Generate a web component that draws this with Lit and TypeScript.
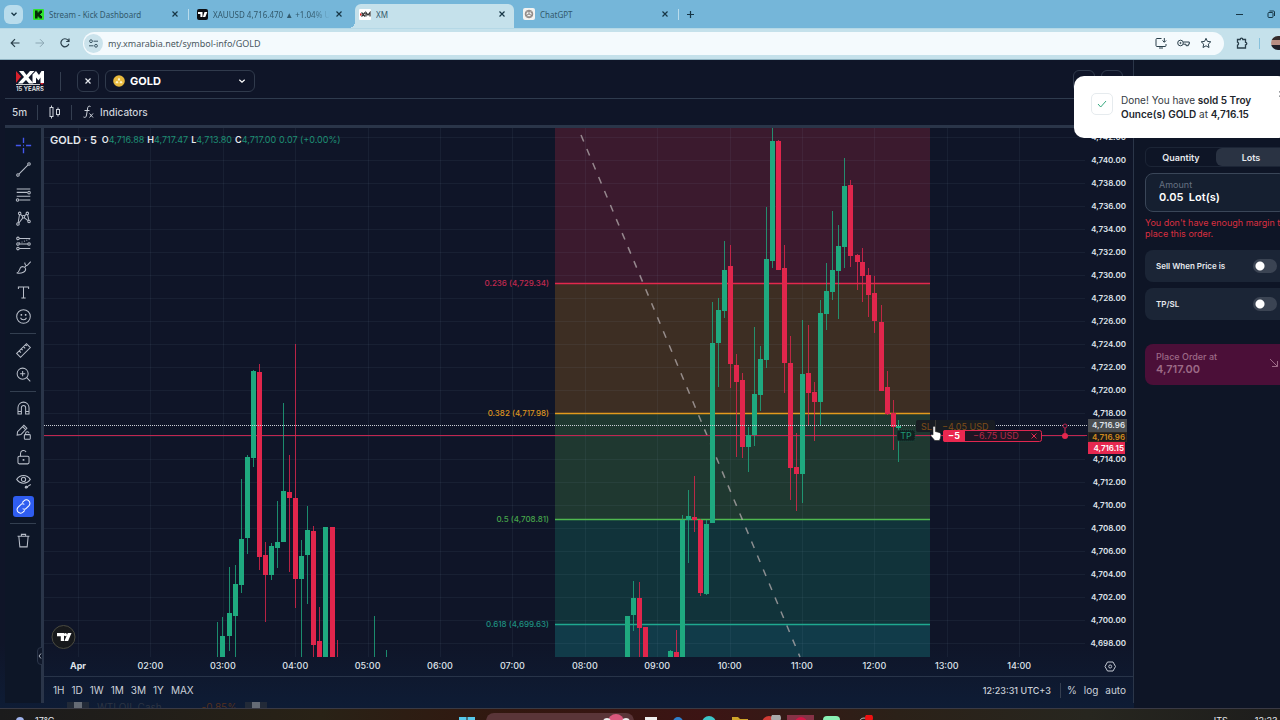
import { LitElement, html, svg, css } from "lit";
import { customElement, state } from "lit/decorators.js";
import { classMap } from "lit/directives/class-map.js";

type Candle = [number, number, number, number, number, "u" | "d"];

/* x, high, body top, body bottom, low, direction */
const CANDLES: Candle[] = [
  [217, 622, 656, 656, 657, "u"], [222, 617, 636, 657, 657, "u"], [229, 567, 613, 636, 651, "u"],
  [235, 565, 584, 616, 657, "u"], [241, 479, 539, 585, 593, "u"], [247, 455, 457, 538, 554, "u"],
  [253, 370, 371, 458, 467, "u"], [259, 364, 372, 557, 570, "d"], [265, 542, 555, 575, 622, "d"],
  [271, 543, 546, 575, 580, "u"], [277, 501, 542, 548, 568, "u"], [283, 403, 491, 542, 542, "u"],
  [289, 455, 492, 498, 572, "d"], [295, 344, 498, 579, 608, "d"], [301, 540, 556, 579, 657, "u"],
  [307, 506, 530, 555, 604, "u"], [313, 526, 531, 645, 657, "d"], [319, 607, 641, 657, 657, "d"],
  [325, 527, 527, 657, 657, "u"], [332, 527, 527, 657, 657, "d"], [337, 640, 657, 657, 657, "d"],
  [374, 616, 657, 657, 657, "u"], [386, 650, 657, 657, 657, "u"],
  [627, 616, 616, 657, 657, "u"], [633, 581, 598, 615, 631, "u"], [639, 582, 598, 628, 657, "d"],
  [645, 627, 627, 657, 657, "d"], [670, 650, 651, 657, 657, "u"], [676, 630, 652, 657, 657, "d"],
  [682, 515, 520, 657, 657, "u"], [688, 490, 516, 520, 563, "u"], [694, 476, 517, 520, 532, "d"],
  [700, 519, 520, 593, 596, "d"], [706, 520, 524, 594, 595, "u"], [712, 302, 343, 523, 523, "u"],
  [718, 298, 310, 343, 387, "u"], [724, 241, 270, 311, 318, "u"], [730, 245, 266, 364, 388, "d"],
  [736, 354, 365, 382, 457, "d"], [742, 373, 380, 447, 458, "d"], [748, 427, 435, 447, 472, "u"],
  [754, 327, 394, 435, 446, "u"], [760, 346, 359, 395, 411, "u"], [766, 207, 259, 360, 368, "u"],
  [772, 128, 141, 261, 268, "u"], [778, 140, 141, 270, 270, "d"], [784, 245, 268, 363, 393, "d"],
  [790, 336, 363, 468, 500, "d"], [796, 433, 467, 474, 511, "d"], [802, 320, 374, 474, 503, "u"],
  [808, 325, 373, 393, 425, "d"], [814, 382, 392, 402, 441, "d"], [820, 300, 313, 402, 425, "u"],
  [826, 263, 291, 314, 330, "u"], [832, 211, 270, 292, 300, "u"], [838, 225, 246, 271, 319, "u"],
  [844, 158, 186, 247, 268, "u"], [850, 180, 185, 256, 267, "d"], [857, 254, 255, 262, 290, "d"],
  [862, 248, 262, 276, 302, "d"], [868, 268, 275, 295, 317, "d"], [874, 276, 293, 321, 333, "d"],
  [881, 305, 322, 391, 391, "d"], [887, 371, 387, 414, 415, "d"], [893, 400, 413, 427, 450, "d"],
  [898, 420, 426, 428, 462, "u"],
];

const TIMES = ["Apr", "02:00", "03:00", "04:00", "05:00", "06:00", "07:00", "08:00", "09:00", "10:00", "11:00", "12:00", "13:00", "14:00"];
const HOUR = 72.4;
const timeX = (i: number) => 78 + i * HOUR;
const priceY = (p: number) => 160 + (4740 - p) * 11.5;
const money = (p: number) => p.toLocaleString("en-US", { minimumFractionDigits: 2 });

const BANDS = [
  { top: 128, bottom: 283, fill: "#3b1a2e" },
  { top: 283, bottom: 413, fill: "#3d2e23" },
  { top: 413, bottom: 519, fill: "#1f3830" },
  { top: 519, bottom: 624, fill: "#11333a" },
  { top: 624, bottom: 657, fill: "#113b49" },
];
const LEVELS = [
  { y: 283, label: "0.236 (4,729.34)", color: "#e3284d", text: "#c22950" },
  { y: 413, label: "0.382 (4,717.98)", color: "#e39a1d", text: "#dd9420" },
  { y: 519, label: "0.5 (4,708.81)", color: "#4fb84f", text: "#47a64b" },
  { y: 624, label: "0.618 (4,699.63)", color: "#1fa890", text: "#1f9080" },
];

@customElement("price-chart")
export class PriceChart extends LitElement {
  static styles = css`
    :host { display: block; flex: 1; min-height: 0; position: relative; font-family: Inter, "Open Sans", sans-serif; }
    .canvas { display: block; width: 100%; height: 100%; }
    .legend { position: absolute; left: 6px; top: 5px; display: flex; gap: 3px; align-items: center; font-size: 9px; line-height: 14px; color: #e6e9ee; white-space: nowrap; }
    .legend .name { font-size: 11px; font-weight: 600; margin-right: 2px; }
    .legend b { font-weight: 600; }
    .legend .v { color: #1e8f74; }
    .grid { stroke: #8fa5c0; stroke-opacity: .08; }
    .axis { fill: #dfe3ea; font-size: 9px; font-weight: 500; }
    .price { font-size: 8px; font-weight: 600; }
    .amber { fill: #d08a1c; }
    .white { fill: #fff; }
    .strong { font-weight: 700; }
    .tag { font-size: 9px; }
    .fib { font-size: 8px; font-weight: 500; }
    .u { fill: #1fa97f; stroke: #1fa97f; }
    .d { fill: #e0264c; stroke: #e0264c; }
    .wick { opacity: .8; }
    .body { stroke: none; }
    .trend { stroke: #b4acae; stroke-opacity: .75; stroke-width: 1.5; stroke-dasharray: 7 8.2; }
  `;

  private plot() {
    return svg`
      ${BANDS.map(b => svg`<rect x="555" y=${b.top} width="375" height=${b.bottom - b.top} fill=${b.fill}></rect>`)}
      ${Array.from({ length: 23 }, (_, i) => 4742 - i * 2).map(p => svg`<line class="grid" x1="44" x2="1085" y1=${Math.round(priceY(p)) + 0.5} y2=${Math.round(priceY(p)) + 0.5}></line>`)}
      ${TIMES.map((_, i) => svg`<line class="grid" y1="128" y2="657" x1=${Math.round(timeX(i)) + 0.5} x2=${Math.round(timeX(i)) + 0.5}></line>`)}
      ${LEVELS.map(l => svg`<line x1="555" x2="930" y1=${l.y + 0.5} y2=${l.y + 0.5} stroke=${l.color} stroke-width="1.5"></line>
        <text class="fib" x="549" y=${l.y + 3} text-anchor="end" fill=${l.text}>${l.label}</text>`)}
      <line class="trend" x1="581" y1="135" x2="800" y2="657"></line>
      <line x1="44" x2="1087" y1="435.5" y2="435.5" stroke="#c02650" stroke-width="1"></line>
      ${CANDLES.map(([x, hi, top, bot, lo, k]) => svg`
        <line class="wick ${k}" x1=${x + 0.5} x2=${x + 0.5} y1=${hi} y2=${lo}></line>
        <rect class="body ${k}" x=${x - 2} y=${top} width="5" height=${bot - top}></rect>`)}
      <line x1="44" x2="1087" y1="425.5" y2="425.5" stroke="#ccd0d8" stroke-dasharray="1 1"></line>`;
  }

  private orders() {
    return svg`
      <rect x="916" y="420" width="79" height="12" rx="2" fill="#181c22"></rect>
      <text class="tag" x="921" y="430" fill="#7d4c19">SL</text>
      <text class="tag" x="942" y="430" fill="#7d4c19">−4.05 USD</text>
      <line x1="935.5" x2="935.5" y1="420" y2="432" stroke="#3b3a35"></line>
      <rect x="897" y="430" width="18" height="11" rx="2" fill="#10201f" stroke="#1b5045" stroke-dasharray="1 1"></rect>
      <text class="tag" x="906" y="439" text-anchor="middle" fill="#209574">TP</text>
      <rect x="943.5" y="430.5" width="98" height="11" rx="2" fill="#1f1422" stroke="#df2750"></rect>
      <path d="M945 430h20v12h-20a2 2 0 0 1-2-2v-8a2 2 0 0 1 2-2z" fill="#ea2850"></path>
      <text class="tag strong" x="954" y="439" text-anchor="middle" fill="#fff">−5</text>
      <text class="tag" x="973" y="439" fill="#b52848">−6.75 USD</text>
      <path d="M1031.5 433.5l5 5m0-5l-5 5" stroke="#e02a50" fill="none"></path>
      <path d="M1065 428v8" stroke="#df2750"></path>
      <circle cx="1065" cy="426" r="2" fill="#0f1528" stroke="#b3244c"></circle>
      <circle cx="1065" cy="436" r="3" fill="#e4274e"></circle>
      <path d="M933 427.5c0-1.7 2.3-1.7 2.300 0v4l3.700.9c1.500.4 2 1.200 1.900 2.600l-.5 3.200-1 2.300h-4.600l-3.600-4.200c-1-1.300.5-2.500 1.800-1.400z" fill="#fff" stroke="#222" stroke-width=".6"></path>`;
  }

  private priceAxis() {
    const labels = Array.from({ length: 23 }, (_, i) => 4742 - i * 2).filter(p => p !== 4716);
    return svg`
      ${labels.map(p => svg`<text class="axis price" x="1126" text-anchor="end" y=${Math.round(priceY(p)) + 3}>${money(p)}</text>`)}
      <rect x="1088" y="419" width="39" height="13" fill="#4a4d50"></rect>
      <text class="axis price" x="1125" text-anchor="end" y="428">4,716.96</text>
      <rect x="1088.5" y="432.5" width="38" height="9" fill="#1b1b1c" stroke="#4a3a20" stroke-dasharray="1 1"></rect>
      <text class="axis price amber" x="1125" text-anchor="end" y="440">4,716.96</text>
      <rect x="1088" y="442" width="37" height="12" fill="#e62850"></rect>
      <text class="axis price white" x="1124" text-anchor="end" y="451">4,716.15</text>`;
  }

  render() {
    return html`
      <svg class="canvas" viewBox="44 128 1089 548" preserveAspectRatio="xMaxYMin slice" role="img" aria-label="GOLD five minute candles">
        ${this.plot()} ${this.orders()} ${this.priceAxis()}
        ${TIMES.map((t, i) => svg`<text class="axis ${i === 0 ? "strong" : ""}" text-anchor="middle" x=${timeX(i)} y="669">${t}</text>`)}
        <circle cx="63.5" cy="637" r="11.5" fill="#17191c" stroke="#4a4a40"></circle>
        <path d="M57 633h7v8h-3.200v-4.800H57zM65.400 633a1.600 1.600 0 1 1 0 3.200 1.600 1.600 0 0 1 0-3.200zM67.800 633h3.700l-3.400 8h-3.700z" fill="#fff"></path>
        <path d="M1107.5 662h5.500l2.500 4.500-2.500 4.500h-5.500l-2.500-4.500z" fill="none" stroke="#c3c8d2"></path>
        <circle cx="1110.2" cy="666.5" r="1.5" fill="none" stroke="#c3c8d2"></circle>
      </svg>
      <div class="legend">
        <span class="name">GOLD · 5</span>
        <span><b>O</b><span class="v">4,716.88</span></span>
        <span><b>H</b><span class="v">4,717.47</span></span>
        <span><b>L</b><span class="v">4,713.80</span></span>
        <span><b>C</b><span class="v">4,717.00</span></span>
        <span class="v">0.07 (+0.00%)</span>
      </div>`;
  }
}

const close = html`<svg width="8" height="8" viewBox="0 0 8 8" fill="none" stroke="currentColor" stroke-width="1.2"><path d="M1.500 1.500l5 5m0-5l-5 5"/></svg>`;

const TOOLS = [
  [
    ["Cross", svg`<path stroke="#4457ee" stroke-width="1.600" d="M10 1v6M10 13v6M1 10h6M13 10h6M9.500 10h1"/>`],
    ["Trend line", svg`<circle cx="3.500" cy="16.500" r="1.500"/><circle cx="16.500" cy="3.500" r="1.500"/><path d="M4.600 15.400L15.400 4.600"/>`],
    ["Fib retracement", svg`<path d="M2 3.500h16M2 7.500h12.500M2 12h16M5 16.500h13"/><circle cx="16.500" cy="7.800" r="1.500"/><circle cx="3" cy="16.500" r="1.500"/>`],
    ["Patterns", svg`<circle cx="5.500" cy="4" r="1.500"/><circle cx="14.500" cy="4" r="1.500"/><circle cx="10" cy="8" r="1.500"/><circle cx="3.500" cy="16.500" r="1.500"/><circle cx="16.500" cy="13.500" r="1.500"/><path d="M5.300 5.500L3.700 15M14.800 5.500l1.500 6.500M6.400 5.300l2.500 1.900M11 7l2.500-2M4.500 15.300l4.700-6M11 9.200l4.400 3.300"/>`],
    ["Forecasting", svg`<circle cx="3.500" cy="4" r="1.500"/><circle cx="3.500" cy="10.500" r="1.500"/><circle cx="16.500" cy="10.500" r="1.500"/><circle cx="3.500" cy="16" r="1.500"/><path d="M5 4h13M5 10.500h10M5 16h13"/><path stroke-dasharray="1 2" d="M5 9.500l12-4.500"/>`],
    ["Brush", svg`<path d="M2 16.500c2.500-.5 3-3 4-5.500 1.500-3 6-2.500 6.500.5.500 3.500-4 5.800-10.500 5zM11.500 4c0 2 1 4 3 3.500L18.500 3M11.500 9.500l1.500-1.500"/>`],
    ["Text", svg`<path d="M4 6V3.500h12V6M10 3.500v13M7.500 16.500h5"/>`],
    ["Emoji", svg`<circle cx="10" cy="10" r="8"/><path d="M6.500 11.500c1 3 6 3 7 0"/><path stroke-width="1.800" d="M7.500 7.200v1.800M12.500 7.200v1.800"/>`],
  ],
  [
    ["Measure", svg`<path d="M2 13.500L13.500 2 18 6.500 6.500 18zM5 10.500l2 2M7.500 8l1.500 1.500M10 5.500l2 2M12.500 3.200l1.500 1.500"/>`],
    ["Zoom in", svg`<circle cx="9" cy="9" r="6.500"/><path d="M13.800 13.800L18 18M9 6v6M6 9h6"/>`],
  ],
  [
    ["Magnet", svg`<path d="M3.500 16.500V9a6.500 6.500 0 0 1 13 0v7.500h-4V9a2.500 2.500 0 0 0-5 0v7.500zM3.500 13.500h4M12.500 13.500h4"/>`],
    ["Lock drawing", svg`<path d="M2.500 13l.5-4 7.500-7.500 3.500 3.500-7 7.500zM9 3l3.500 3.500"/><rect x="11" y="12.500" width="7" height="5.500" rx="1"/><path d="M12.500 12.500v-1.500a2 2 0 0 1 4 0"/>`],
    ["Lock all", svg`<rect x="3.500" y="8.500" width="13" height="9" rx="1.500"/><path d="M6.500 8.500V5a3.500 3.500 0 0 1 6.500-1.500"/><path stroke-width="2" d="M10 11.800v2"/>`],
    ["Hide", svg`<path d="M2 7.500c4-6 12-6 16 0-4 6-12 6-16 0z"/><circle cx="10" cy="7.500" r="2.500"/><path fill="currentColor" d="M12 17.500c0-2 1.500-2.500 3-1.500-.3 1.500-1.500 2-3 1.500M15.500 15.500l3-2"/>`],
    ["Sync", svg`<path d="M8.500 5.500l2-2a3.800 3.800 0 0 1 6 5.500l-3 3a3.500 3.500 0 0 1-4.500.5M11.500 14.500l-2 2a3.800 3.800 0 0 1-6-5.500l3-3a3.500 3.500 0 0 1 4.500-.5"/>`],
  ],
  [["Remove", svg`<path d="M3 5h14M7.500 4.500V2.800h5v1.700M4.500 5l1.200 12.500h8.600L15.500 5"/>`]],
] as const;

@customElement("app-root")
export class AppRoot extends LitElement {
  static styles = css`
    * { box-sizing: border-box; }
    :host { display: flex; flex-direction: column; height: 100vh; overflow: hidden; position: relative; background: #0f1528; color: #e6e9ee; font-family: Inter, "Open Sans", sans-serif; font-size: 10px; }
    button, input, select { font: inherit; color: inherit; background: none; border: 0; padding: 0; margin: 0; }
    svg { display: block; flex: none; }
    button { display: flex; align-items: center; justify-content: center; }

    .tabs { display: flex; align-items: center; height: 28px; padding: 0 4px; background: #75b6d9; color: #173646; font-family: "Noto Sans", sans-serif; font-size: 8px; flex: none; }
    .find { width: 19px; height: 19px; border-radius: 6px; background: #b9dcec; margin-right: 2px; }
    .tab { position: relative; display: flex; align-items: center; gap: 5px; width: 163px; height: 28px; padding: 0 9px 0 8px; }
    .tab .title { flex: 1; white-space: nowrap; overflow: hidden; color: #32596c; text-decoration: none; }
    .tab.fade .title { mask-image: linear-gradient(90deg, #000 85%, transparent); }
    .tab > * { position: relative; }
    .tab.active { background: radial-gradient(circle at 0 0, transparent 6px, #c5e1eb 6px) left bottom / 6px 6px no-repeat; margin-left: -3px; padding-left: 10px; width: 166px; }
    .tab.active::before { content: ""; position: absolute; inset: 4px 1px 0 6px; border-radius: 6px 6px 0 0; background: #c5e1eb; }
    .sep { width: 1px; height: 11px; background: #b9dcec; }
    .add { margin-left: 7px; }
    .win { display: flex; gap: 24px; margin-left: auto; padding-right: 1px; }

    .nav { display: flex; align-items: center; gap: 15px; height: 32px; padding: 0 0 2px 10px; background: #c5e1eb; border-bottom: 1px solid #8fb3c2; color: #2a3f4b; flex: none; border-top: 1px solid #b5d8e6; }
    .nav .dim { color: #8ba6b3; }
    .address { display: flex; align-items: center; flex: 1; height: 23px; border-radius: 12px; background: #f4fafd; padding: 0 12px 0 1px; gap: 5px; margin-left: -2px; }
    .address input { flex: 1; min-width: 0; font-family: "Noto Sans", sans-serif; font-size: 9px; color: #4a585f; height: 20px; }
    .site { width: 19px; height: 19px; border-radius: 50%; background: #cbe3ec; }
    .marks { display: flex; gap: 10px; }
    .ext { display: flex; align-items: center; gap: 11px; margin-left: -3px; }
    .bar { width: 1px; height: 11px; background: #87c1dc; }
    .avatar { width: 9px; height: 14px; border-radius: 7px 0 0 7px; background: linear-gradient(#352b2b 30%, #b98e83 30% 65%, #20202a 65%); }

    .app { display: flex; flex: 1; min-height: 0; padding-left: 5px; background: linear-gradient(#0f1528 90%, #0e1c35); }
    .desk { display: flex; flex-direction: column; flex: 1; min-width: 0; margin-bottom: 5px; border-right: 1px solid #2b3649; }
    .head { display: flex; align-items: center; height: 39px; padding: 4px 10px 0 11px; border-bottom: 1px solid #2f3b4e; flex: none; }
    .logo { width: 28px; }
    .rule { width: 1px; height: 19px; background: #343e50; margin: 0 16px; }
    .box { width: 22px; height: 22px; border: 1px solid #303a4c; border-radius: 6px; }
    .symbol { display: flex; align-items: center; gap: 5px; width: 150px; height: 22px; border: 1px solid #303a4c; border-radius: 6px; margin-left: 6px; padding: 0 8px 0 7px; }
    .symbol select { flex: 1; appearance: none; font-size: 11px; font-weight: 700; color: #fff; outline: 0; }
    .actions { display: flex; gap: 6px; margin-left: auto; }
    .bars { display: flex; align-items: center; height: 29px; padding: 0 7px; border-bottom: 3px solid #2a3549; flex: none; font-weight: 500; color: #cdd2da; }
    .bars .rule { height: 15px; margin: 0 11px 0 10px; }
    .ind { gap: 6px; }
    .work { display: flex; flex: 1; min-height: 0; }
    .tools { display: flex; flex-direction: column; width: 39px; border-right: 3px solid #2a3549; padding: 5px 5px 0; flex: none; color: #b9bfca; background: #0d1627; }
    .group { display: flex; flex-direction: column; align-items: center; }
    .group button { width: 21px; height: 24px; }
    .group button:nth-child(even) { height: 25px; }
    .group + .group { border-top: 1px solid #333f50; margin-top: 4px; padding-top: 4px; }
    .group button.on { height: 21px; margin: 2px 0; border-radius: 3px; background: #2f5df0; color: #fff; }
    .main { display: flex; flex-direction: column; flex: 1; min-width: 0; }
    .ranges { display: flex; align-items: center; gap: 7px; height: 27px; border-top: 1px solid #283449; padding: 0 7px 0 9px; color: #ccd1d9; flex: none; white-space: nowrap; }
    .clock { margin-left: auto; font-size: 9px; font-weight: 500; }
    .ranges .rule { height: 15px; margin: 0 -1px 0 2px; }

    .panel { flex: 0 0 146px; overflow: hidden; padding: 87px 0 0 11px; background: #0e1526; font-size: 9px; }
    .order { display: flex; flex-direction: column; width: 142px; }
    .seg { display: flex; height: 20px; border: 1px solid #1c2536; border-radius: 6px; }
    .seg button { flex: 1; font-weight: 600; border-radius: 6px; }
    .seg button.on { background: #2a3343; }
    .amount { display: flex; flex-direction: column; height: 39px; margin-top: 6px; padding: 5px 13px; border: 1px solid #3a4658; border-radius: 8px; background: #151f30; color: #667182; line-height: 11px; }
    .amount input { width: 100%; color: #fff; font-size: 11px; font-weight: 600; height: 13px; }
    .warn { margin: 5px 0 11px; color: #d92f40; line-height: 11px; white-space: nowrap; }
    .card { display: flex; align-items: center; justify-content: space-between; height: 32px; margin-bottom: 6px; padding: 0 10px 0 11px; border-radius: 8px; background: #1b2536; font-size: 8px; font-weight: 600; }
    .switch { appearance: none; width: 24px; height: 14px; border-radius: 7px; background: radial-gradient(circle at 7px 7px, #fff 4px, transparent 5px) #3b4453; }
    .place { justify-content: space-between; height: 41px; margin-top: 18px; padding: 0 8px 3px 11px; border-radius: 8px; background: #4b0f38; color: #9c6a86; text-align: left; line-height: 13px; font-weight: 500; }
    .place b { display: block; font-size: 11px; font-weight: 600; }

    .toast { position: absolute; left: calc(100% - 206px); top: 76px; width: 214px; height: 62px; display: flex; align-items: center; gap: 8px; padding: 0 17px; border-radius: 10px; background: #fff; color: #343a42; line-height: 14px; white-space: nowrap; }
    .toast b { font-weight: 600; color: #22262c; }
    .tick { display: flex; align-items: center; justify-content: center; width: 22px; height: 22px; margin-bottom: 6px; border: 1px solid #e6ebee; border-radius: 5px; }
    .toast button { position: absolute; right: 2px; top: 14px; }

    .handle { position: absolute; left: 37px; top: 647px; width: 6px; height: 18px; border: 1px solid #2a3549; border-radius: 4px 0 0 4px; background: #10182a; }

    .ghost { position: absolute; left: 67px; bottom: 12px; display: flex; gap: 8px; width: 200px; height: 6px; overflow: hidden; color: #2c3443; line-height: 10px; }
    .ghost i { width: 22px; height: 6px; background: linear-gradient(90deg, #222a38 30%, #656b75 30% 70%, #222a38 70%); }
    .ghost em { margin-left: auto; font-style: normal; color: #54301f; }

    .taskbar { display: flex; align-items: flex-start; height: 12px; overflow: hidden; flex: none; border-top: 1px solid #3a3a44; background: linear-gradient(90deg, #1b1b1c 0, #292216 25%, #32170f 40%, #3c1414 55%, #2b2118 70%, #27261f 85%, #1d1d1c); padding: 6px 0 0 15px; }
    .weather, .time { font-size: 9px; line-height: 11px; display: flex; gap: 9px; white-space: nowrap; flex: 1 1 0; }
    .weather { flex-basis: 22px; }
    .time { justify-content: flex-end; gap: 27px; margin-right: -14px; }
    .apps { display: flex; gap: 18px; align-items: flex-start; }
    .search { width: 148px; height: 16px; margin: -2px -7px 0 -7px; border-radius: 8px; background: #5a3538; }
  `;

  @state() private unit = "Lots";

  private tab(icon: unknown, title: string, cls = "") {
    return html`<div class="tab ${cls}">${icon}<a class="title" href="#">${title}</a><button aria-label="Close tab">${close}</button></div>`;
  }

  private browser() {
    return html`
      <header class="tabs">
        <button class="find" aria-label="Search tabs"><svg width="8" height="8" viewBox="0 0 8 8" fill="none" stroke="currentColor" stroke-width="1.300"><path d="M1.500 2.800L4 5.300l2.500-2.500"/></svg></button>
        ${this.tab(html`<svg width="11" height="11" viewBox="0 0 11 11"><rect width="11" height="11" rx="1" fill="#2fe32f"/><path d="M2 1.500h2.600v2h1v-1h1v-1h2.400v2.500h-1v1h-1v1h1v1h1v2.500H6.600v-1h-1v-1h-1v2H2z" fill="#072a0b"/></svg>`, "Stream - Kick Dashboard")}
        <span class="sep"></span>
        ${this.tab(html`<svg width="11" height="11" viewBox="0 0 11 11"><rect width="11" height="11" rx="2" fill="#0c0e12"/><path d="M1 3h4.500v5H3.400V5H1zM7.500 3h2.800l-2 5H5.900z" fill="#fff"/></svg>`, "XAUUSD 4,716.470 ▲ +1.04% U", "fade")}
        ${this.tab(html`<svg width="12" height="11" viewBox="0 0 12 11"><rect width="12" height="11" rx="1" fill="#fff"/><path d="M1 4v3l2-1.500z" fill="#d22"/><path d="M2.500 3.500l3.500 4M6 3.500l-3.500 4M7 7.500v-4l2 2.500 2-2.500v4" stroke="#333" stroke-width="1.200" fill="none"/></svg>`, "XM", "active")}
        ${this.tab(html`<svg width="12" height="12" viewBox="0 0 12 12" fill="none" stroke="#8b8582"><rect width="12" height="12" rx="2" fill="#f3f3f1" stroke="none"/><circle cx="6" cy="6" r="3.800"/><path d="M3 4.500l3-1.500 3 1.700v3L6 9 3 7.500zM6 3v3l3 1.700M3 7.500L6 6"/></svg>`, "ChatGPT")}
        <span class="sep"></span>
        <button class="add" aria-label="New tab"><svg width="9" height="9" viewBox="0 0 9 9" stroke="currentColor" stroke-width="1.200"><path d="M4.500 1v7M1 4.500h7"/></svg></button>
        <div class="win">
          <svg width="7" height="8" viewBox="0 0 7 8" stroke="currentColor"><path d="M0 4.500h7"/></svg>
          <svg width="8" height="8" viewBox="0 0 8 8" fill="none" stroke="currentColor"><rect x="1" y="2.500" width="5" height="5" rx="1"/><path d="M2.500 1h4a1 1 0 0 1 1 1v4"/></svg>
        </div>
      </header>
      <nav class="nav">
        <button aria-label="Back"><svg width="10" height="10" viewBox="0 0 10 10" fill="none" stroke="currentColor" stroke-width="1.200"><path d="M9.500 5H1.200M5 1.200L1.200 5 5 8.800"/></svg></button>
        <button class="dim" aria-label="Forward"><svg width="10" height="10" viewBox="0 0 10 10" fill="none" stroke="currentColor"><path d="M.5 5h8.300M5 1.200L8.800 5 5 8.800"/></svg></button>
        <button aria-label="Reload"><svg width="10" height="10" viewBox="0 0 10 10" fill="none" stroke="currentColor" stroke-width="1.200"><path d="M8.800 5.800A4 4 0 1 1 8 2.200L9 3.300M9 .6v2.900H6.200"/></svg></button>
        <div class="address">
          <span class="site"><svg width="19" height="19" viewBox="0 0 19 19" fill="none" stroke="#3b5664"><circle cx="7" cy="7.200" r="1.400"/><path d="M9.500 7.200H14M5 11.800h4.500"/><circle cx="12" cy="11.800" r="1.400"/></svg></span>
          <input aria-label="Address" value="my.xmarabia.net/symbol-info/GOLD">
          <div class="marks">
            <svg width="12" height="12" viewBox="0 0 12 12" fill="none" stroke="currentColor"><path d="M6.500 1.500H2a1 1 0 0 0-1 1v6a1 1 0 0 0 1 1h8a1 1 0 0 0 1-1V7M4 11h4M9.300 1v4M7.500 3.500l1.800 1.800 1.800-1.800"/></svg>
            <svg width="13" height="12" viewBox="0 0 13 12" fill="none" stroke="currentColor"><circle cx="3.500" cy="6" r="2.800"/><circle cx="3.500" cy="6" r=".6"/><path d="M6.300 5h6v2.200h-1v1.500H9V7.200H6.300"/></svg>
            <svg width="12" height="12" viewBox="0 0 12 12" fill="none" stroke="currentColor"><path d="M6 1.300l1.400 3.100 3.400.4-2.500 2.300.7 3.400-3-1.700-3 1.700.7-3.400L1.200 4.800l3.400-.4z"/></svg>
          </div>
        </div>
        <div class="ext">
          <svg width="12" height="12" viewBox="0 0 12 12" fill="none" stroke="currentColor" stroke-width="1.300"><path d="M1.500 2.500h2.700a1.300 1.300 0 0 1 2.600 0h2.700v2.800a1.300 1.300 0 0 1 0 2.600V11h-8V8.200a1.600 1.600 0 0 0 0-3z"/></svg>
          <span class="bar"></span><span class="avatar"></span>
        </div>
      </nav>`;
  }

  private head() {
    return html`
      <div class="head">
        <svg class="logo" width="28" height="20" viewBox="0 0 28 20"><path d="M0 0l5 5.500L0 12z" fill="#d71f2b"/><path d="M3 0h4.500l3 4L14 0h4.500l-6 6.500 5 6H13L10 9l-3.500 3.500H1.800L8 6z" fill="#fff"/><path d="M16.500 12V3.500L20 0l3 4 2.500-4H28v12h-3.500V6.500L22.500 9.500 20 6.500V12z" fill="#fff"/><path d="M24 12h4l-2 2z" fill="#d71f2b"/><path d="M0 13.500h24" stroke="#ccc"/><text x="0" y="20" font-size="6" font-weight="600" fill="#e8e8e8">15 YEARS</text></svg>
        <span class="rule"></span>
        <button class="box" aria-label="Close">${close}</button>
        <label class="symbol">
          <svg width="12" height="12" viewBox="0 0 12 12"><circle cx="6" cy="6" r="5.800" fill="#e8b93d"/><path d="M4.700 5.500L5.200 3.300h1.600l.5 2.200zM2.500 8.300L3 6.200h2l.5 2.100zM6.500 8.300L7 6.200h2l.5 2.100z" fill="#fff3c4"/></svg>
          <select aria-label="Symbol"><option>GOLD</option></select>
          <svg width="8" height="8" viewBox="0 0 8 8" fill="none" stroke="#fff" stroke-width="1.200"><path d="M1.300 2.800L4 5.300l2.700-2.500"/></svg>
        </label>
        <div class="actions"><button class="box" aria-label="Favourite"></button><button class="box" aria-label="More"></button></div>
      </div>
      <div class="bars">
        <button>5m</button><span class="rule"></span>
        <button aria-label="Chart type"><svg width="12" height="14" viewBox="0 0 12 14" fill="none" stroke="currentColor"><path d="M2.500.5v2M2.500 11.500v2M9 2.500v2M9 9.500v2"/><rect x="1" y="2.500" width="3" height="9"/><rect x="7.500" y="4.500" width="3" height="5"/></svg></button>
        <span class="rule"></span>
        <button class="ind"><svg width="11" height="14" viewBox="0 0 11 14" fill="none" stroke="currentColor"><path d="M7.500 1.500C5.500.5 4.800 1.500 4.500 4L3.500 10c-.3 2-1 3-3 2M1.500 5.500h5M6.500 8.500l3.500 4M10 8.500l-3.500 4"/></svg>Indicators</button>
      </div>`;
  }

  private order() {
    return html`
      <aside class="panel"><div class="order">
        <div class="seg">${["Quantity", "Lots"].map(u => html`<button class=${classMap({ on: this.unit === u })} @click=${() => (this.unit = u)}>${u}</button>`)}</div>
        <label class="amount">Amount<input value="0.05  Lot(s)"></label>
        <p class="warn">You don't have enough margin to<br>place this order.</p>
        <label class="card">Sell When Price is<input class="switch" type="checkbox" role="switch"></label>
        <label class="card">TP/SL<input class="switch" type="checkbox" role="switch"></label>
        <button class="place"><span>Place Order at<b>4,717.00</b></span><svg width="10" height="10" viewBox="0 0 10 10" fill="none" stroke="currentColor"><path d="M1 1l7.500 7.500M8.500 3v5.500H3"/></svg></button>
      </div></aside>`;
  }

  render() {
    return html`
      ${this.browser()}
      <main class="app">
        <section class="desk">
          ${this.head()}
          <div class="work">
            <div class="tools">
              ${TOOLS.map(g => html`<div class="group">${g.map(([name, icon]) => html`<button aria-label=${name} class=${classMap({ on: name === "Sync" })}><svg width="17" height="17" viewBox="0 0 20 20" fill="none" stroke="currentColor" stroke-width="1.200">${icon}</svg></button>`)}</div>`)}
            </div>
            <div class="main">
              <price-chart></price-chart>
              <div class="ranges">
                ${["1H", "1D", "1W", "1M", "3M", "1Y", "MAX"].map(r => html`<button>${r}</button>`)}
                <span class="clock">12:23:31 UTC+3</span><span class="rule"></span>
                <button>%</button><button>log</button><button>auto</button>
              </div>
            </div>
          </div>
        </section>
        ${this.order()}
      </main>
      <div class="handle"><svg width="4" height="16" viewBox="0 0 4 16" fill="none" stroke="#aab1bd"><path d="M3 5.500L1 8l2 2.500"/></svg></div>
      <div class="ghost"><i></i><span>WTI OIL Cash</span><em>-0.85%</em><i></i></div>
      <footer class="taskbar">
        <div class="weather"><svg width="11" height="11" viewBox="0 0 11 11"><circle cx="5" cy="6" r="4" fill="#9fb2ea"/></svg><span>17°C</span></div>
        <div class="apps">
          <svg width="16" height="14" viewBox="0 0 16 14" fill="#56c8ea"><path d="M0 2h7.500v6H0zM8.500 2H16v6H8.500zM0 9h7.500v5H0zM8.500 9H16v5H8.500z"/></svg>
          <span class="search"><svg width="148" height="12" viewBox="0 0 148 12"><circle cx="130" cy="9" r="8" fill="#d9587c"/><circle cx="121" cy="9" r="4" fill="#eee"/><circle cx="140" cy="9" r="4" fill="#eee"/></svg></span>
          <svg width="196" height="12" viewBox="0 0 196 12"><path d="M0 2h12v9H0z" fill="#eee"/><circle cx="33" cy="7" r="5" fill="#2f80cc"/><circle cx="64" cy="8" r="7" fill="#3cc5c9"/><path d="M87 2h6l2 2h8v8H87z" fill="#cfa52a"/><circle cx="124" cy="8" r="7" fill="#d13b34"/><circle cx="131" cy="3" r="5" fill="#aaa"/><rect x="142" y="-6" width="27" height="20" rx="3" fill="#873246"/><circle cx="156" cy="8" r="6" fill="#d51747"/><rect x="178" y="1" width="17" height="14" rx="4" fill="#8af0b4"/></svg>
          <svg width="14" height="12" viewBox="0 0 14 12"><circle cx="5" cy="8" r="5" fill="none" stroke="#bbb"/><circle cx="10" cy="3" r="4" fill="#e11"/></svg>
        </div>
        <div class="time"><span>ITS</span><span>12:23 PM</span></div>
      </footer>
      <div class="toast" role="status">
        <span class="tick"><svg width="10" height="8" viewBox="0 0 10 8" fill="none" stroke="#35a97e"><path d="M1 4l2.700 3L9 1"/></svg></span>
        <span>Done! You have <b>sold 5 Troy<br>Ounce(s) GOLD</b> at <b>4,716.15</b></span>
        <button aria-label="Dismiss">${close}</button>
      </div>`;
  }
}
